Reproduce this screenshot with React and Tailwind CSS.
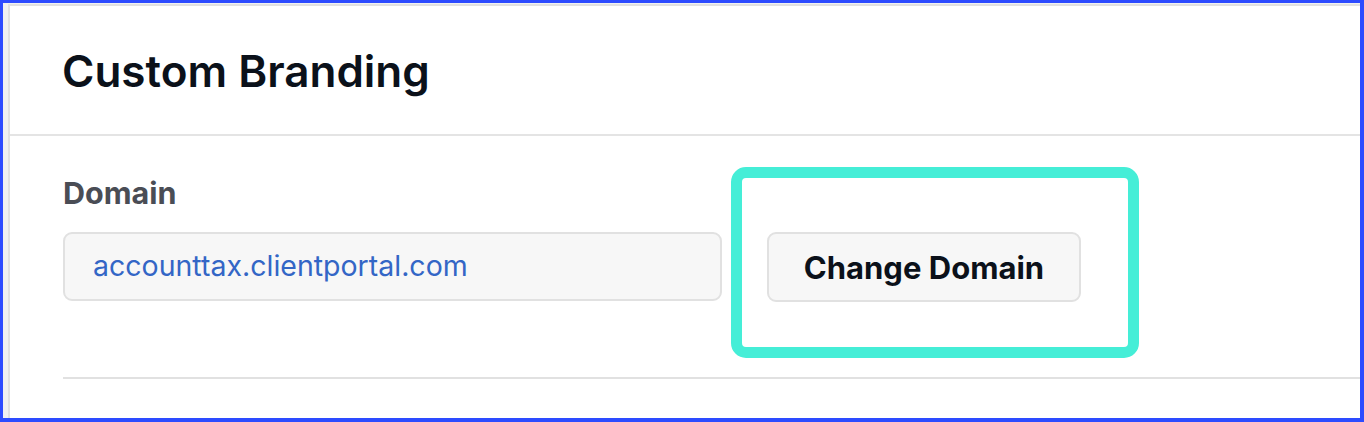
export default function App() {
  const font = { fontFamily: 'Inter, "Noto Sans", sans-serif' };
  return (
    <div
      className="relative w-[1364px] h-[422px] box-border overflow-hidden border-solid border-l-[3px] border-t-[3px] border-r-4 border-b-4 border-[#2d4bff] bg-[#f1f1f1] flex pl-[5px] pt-[1px]"
      style={font}
    >
      <div className="flex-1 flex flex-col bg-white border-l-2 border-t-2 border-[#e1e1e1]">
        <div className="h-[130px] flex items-center pl-[52px] pt-[1px] border-b-2 border-[#e4e4e4]">
          <h1 className="text-[44px] leading-none font-semibold text-[#0b111a]">
            Custom Branding
          </h1>
        </div>
        <div className="flex-1 flex flex-col pl-[53px] pt-[42px]">
          <div className="h-[30px] text-[30.5px] leading-none font-bold text-[#4a4d55]">Domain</div>
          <div className="mt-[24px] flex items-start gap-[45px]">
            <div className="w-[659px] h-[69px] box-border flex items-center pl-[28px] rounded-[9px] border-2 border-[#e1e1e1] bg-[#f7f7f7]">
              <span className="text-[28.5px] leading-none text-[#3366c6]">accounttax.clientportal.com</span>
            </div>
            <button className="w-[314px] h-[70px] box-border flex items-center justify-center rounded-[9px] border-2 border-[#e1e1e1] bg-[#f7f7f7] text-[31px] leading-none font-bold text-[#0b111a]">
              Change Domain
            </button>
          </div>
          <div className="mt-[75px] h-[2px] bg-[#e1e1e1]" />
        </div>
      </div>
      <div className="absolute left-[728px] top-[164px] w-[408px] h-[191px] box-border border-[11px] border-[#45eed7] rounded-[15px] pointer-events-none" />
    </div>
  );
}
